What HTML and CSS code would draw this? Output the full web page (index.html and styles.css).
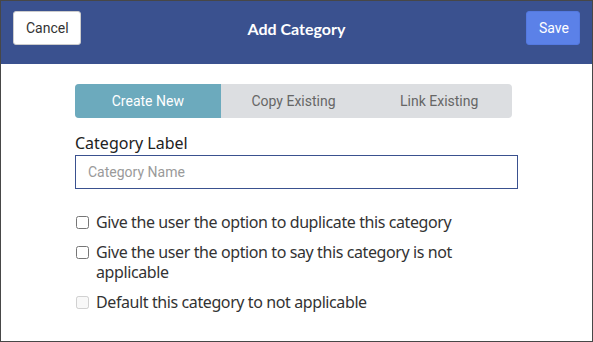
FILE: index.html
```html
<!DOCTYPE html>
<html lang="en">
<head>
  <meta charset="UTF-8">
  <meta name="viewport" content="width=device-width, initial-scale=1.0">
  <title>Add Category</title>
  <link rel="stylesheet" href="styles.css">
</head>
<body>

  <div class="modal">
    <div class="header">
      <button class="btn cancel">Cancel</button>
      <h1>Add Category</h1>
      <button class="btn save">Save</button>
    </div>

    <div class="content">
      <div class="tabs">
        <button class="tab active">Create New</button>
        <button class="tab">Copy Existing</button>
        <button class="tab">Link Existing</button>
      </div>

      <label class="field-label" for="categoryName">Category Label</label>
      <input id="categoryName" class="field" type="text" placeholder="Category Name" autofocus>

      <div class="options">
        <label class="option"><input type="checkbox"><span>Give the user the option to duplicate this category</span></label>
        <label class="option"><input type="checkbox"><span>Give the user the option to say this category is not applicable</span></label>
        <label class="option disabled"><input type="checkbox" disabled><span>Default this category to not applicable</span></label>
      </div>
    </div>
  </div>

</body>
</html>
```

FILE: styles.css
```css
body {
  margin: 0;
  padding: 0;
  background-color: white;
  font-family: "Noto Sans", sans-serif;
}

.modal {
  width: 591px;
  height: 340px;
  border: 1px solid #474747;
  background-color: white;
}

.header {
  box-sizing: border-box;
  height: 63px;
  background-color: #3a518f;
  display: flex;
  align-items: flex-start;
  justify-content: space-between;
  padding: 10px 12px 0 12px;
  position: relative;
}

.header h1 {
  position: absolute;
  top: 10px;
  left: 0;
  right: 0;
  margin: 0;
  line-height: 36px;
  text-align: center;
  color: white;
  font-family: Lato, sans-serif;
  font-size: 16px;
  font-weight: bold;
  pointer-events: none;
}

.btn {
  height: 34px;
  font-family: Roboto, sans-serif;
  font-size: 14px;
  border-radius: 3px;
  padding: 0 12px;
  cursor: pointer;
}

.cancel {
  background-color: white;
  color: #333;
  border: 1px solid #ccc;
  width: 68px;
}

.save {
  background-color: #5b81e8;
  color: white;
  border: 1px solid #5479e0;
  width: 54px;
}

.content {
  padding: 20px 75px 0 74px;
}

.tabs {
  display: flex;
  width: 437px;
  height: 34px;
  background-color: #dcdee1;
  border-radius: 4px;
  overflow: hidden;
}

.tab {
  flex: 1;
  border: none;
  background: transparent;
  font-family: Roboto, sans-serif;
  font-size: 14px;
  color: #666;
  cursor: pointer;
}

.tab.active {
  background-color: #6caabd;
  color: white;
}

.field-label {
  display: block;
  margin-top: 14px;
  font-size: 16px;
  color: #222;
  line-height: 22px;
}

.field {
  display: block;
  box-sizing: border-box;
  width: 443px;
  height: 34px;
  margin-top: 1px;
  border: 1px solid #3a518f;
  padding: 0 12px;
  font-family: Roboto, sans-serif;
  font-size: 14px;
  outline: none;
}

.field::placeholder {
  color: #9a9a9a;
}

.options {
  margin-top: 23px;
}

.option {
  display: flex;
  align-items: flex-start;
  font-size: 16px;
  letter-spacing: -0.4px;
  line-height: 20px;
  color: #333;
  margin-bottom: 10px;
  padding-right: 60px;
}

.option input {
  margin: 4px 7px 0 1px;
  width: 13px;
  height: 13px;
  flex-shrink: 0;
}
```
